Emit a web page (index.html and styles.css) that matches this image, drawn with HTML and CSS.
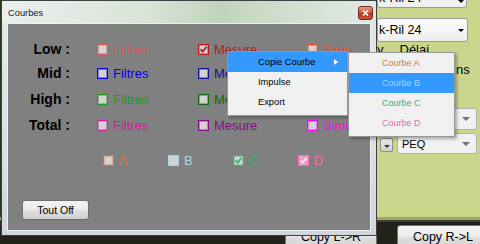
FILE: index.html
```html
<!DOCTYPE html>
<html>
<head>
<meta charset="utf-8">
<link rel="stylesheet" href="styles.css">
</head>
<body>
<div class="app">
  <div class="main">
    <div class="side">
      <div class="combo combo-top"><span>k-Ril 24</span><i class="arr arr-top"></i></div>
      <div class="combo combo-2"><span>k-Ril 24</span><i class="arr"></i></div>
      <div class="lbl-row"><span>y</span><span class="delai">Délai</span></div>
      <div class="ns">ns</div>
      <div class="combo combo-3"><i class="arr arr-gray"></i></div>
      <div class="peq-row">
        <div class="spin"><i class="spin-arr"></i></div>
        <div class="combo combo-4"><span>PEQ</span><i class="arr arr-gray"></i></div>
      </div>
    </div>
  </div>
  <div class="bottom">
    <button class="btn-copy">Copy L-&gt;R</button>
    <button class="btn-copy">Copy R-&gt;L</button>
  </div>

  <div class="window">
    <div class="titlebar">
      <span class="title">Courbes</span>
      <div class="close"><svg width="7" height="6" viewBox="0 0 7 6"><path d="M1 0.5 L6 5.5 M6 0.5 L1 5.5" stroke="#fff" stroke-width="1.6"/></svg></div>
    </div>
    <div class="client">
      <div class="grid">
        <div class="lab">Low :</div>
        <div class="cell c-lf"><span class="cb"></span>Filtres</div>
        <div class="cell c-lm"><span class="cb"><svg width="9" height="9" viewBox="0 0 9 9"><path d="M1.5 4.2 L3.6 6.6 L7.6 1.8" fill="none" stroke="currentColor" stroke-width="1.7"/></svg></span>Mesure</div>
        <div class="cell c-ls"><span class="cb"></span>Simu</div>

        <div class="lab">Mid :</div>
        <div class="cell c-mf"><span class="cb"></span>Filtres</div>
        <div class="cell c-mm"><span class="cb"></span>Mesure</div>
        <div class="cell c-ms"><span class="cb"></span>Simu</div>

        <div class="lab">High :</div>
        <div class="cell c-hf"><span class="cb"></span>Filtres</div>
        <div class="cell c-hm"><span class="cb"></span>Mesure</div>
        <div class="cell c-hs"><span class="cb"></span>Simu</div>

        <div class="lab">Total :</div>
        <div class="cell c-tf"><span class="cb"></span>Filtres</div>
        <div class="cell c-tm"><span class="cb"></span>Mesure</div>
        <div class="cell c-ts"><span class="cb"></span>Simu</div>
      </div>
      <div class="abcd">
        <div class="cell c-a"><span class="cb"></span>A</div>
        <div class="cell c-b"><span class="cb"></span>B</div>
        <div class="cell c-c"><span class="cb"><svg width="9" height="9" viewBox="0 0 9 9"><path d="M1.5 4.2 L3.6 6.6 L7.6 1.8" fill="none" stroke="currentColor" stroke-width="1.7"/></svg></span>C</div>
        <div class="cell c-d"><span class="cb cb-d"><svg width="9" height="9" viewBox="0 0 9 9"><path d="M1.5 4.2 L3.6 6.6 L7.6 1.8" fill="none" stroke="#fbe0ee" stroke-width="1.7"/></svg></span>D</div>
      </div>
      <button class="tout">Tout Off</button>
    </div>
  </div>

  <div class="menu">
    <div class="mi hot"><span>Copie Courbe</span><i class="sub-arrow"></i></div>
    <div class="mi"><span>Impulse</span></div>
    <div class="mi"><span>Export</span></div>
  </div>

  <div class="menu submenu">
    <div class="mi si s-a">Courbe A</div>
    <div class="mi si s-b hot">Courbe B</div>
    <div class="mi si s-c">Courbe C</div>
    <div class="mi si s-d">Courbe D</div>
  </div>
</div>
</body>
</html>
```

FILE: styles.css
```css
* { box-sizing: border-box; margin: 0; padding: 0; }
html, body { width: 480px; height: 244px; overflow: hidden; }
body { font-family: "Liberation Sans", Arial, sans-serif; background: #23231c; color: #000; }

.app { position: relative; width: 480px; height: 244px; display: flex; flex-direction: column; overflow: hidden; }

/* application behind the dialog */
.main { height: 217px; flex: none; display: flex; justify-content: flex-end;
  background: linear-gradient(90deg, #27361f 0, #27361f 2px, #cad68c 2px); }
.side { width: 103px; display: flex; flex-direction: column; font-size: 13px; }

.combo { display: flex; align-items: center; border: 1px solid #9a9a9a; border-radius: 3px;
  background: linear-gradient(#fbfbfb, #eeeeee); padding-left: 1px; flex: none; }
.combo-top { margin-top: -12px; height: 20px; width: 90px; font-size: 12.5px; }
.combo-2 { margin-top: 10px; height: 24px; width: 91px; font-size: 12.5px; }
.arr { margin-left: auto; margin-right: 3px; width: 0; height: 0;
  border-left: 3px solid transparent; border-right: 3px solid transparent; border-top: 3px solid #000; }
.arr-top { margin-top: 6px; margin-right: 2px; }
.arr-gray { border-left-width: 4px; border-right-width: 4px; border-top: 4px solid #6e6e6e; margin-right: 6px; }

.lbl-row { height: 15px; line-height: 15px; display: flex; flex: none; }
.delai { margin-left: 16px; }
.ns { margin-top: 5px; height: 15px; line-height: 15px; padding-left: 79px; flex: none; }

.combo-3 { margin-top: 31px; margin-left: 20px; height: 22px; width: 80px; background: #f1f1f1; border-color: #b4b4b4; }
.peq-row { margin-top: 3px; height: 21px; display: flex; flex: none; }
.spin { margin: 5px 0 0 3px; width: 13px; height: 14px; border: 1px solid #8e8e8e; border-radius: 2px;
  background: linear-gradient(#ececec, #cfcfcf); display: flex; align-items: center; justify-content: center; }
.spin-arr { width: 0; height: 0; border-left: 3px solid transparent; border-right: 3px solid transparent; border-top: 3px solid #333; margin-top: 2px; }
.combo-4 { margin-left: 4px; width: 80px; height: 21px; font-size: 11px; padding-left: 4px; background: #f1f1f1; border-color: #b4b4b4; }

.bottom { flex: 1; display: flex; gap: 20px; padding: 8px 0 0 285px;
  background: linear-gradient(#a2a862 0, #a2a862 3px, #3e3e32 3px, #3e3e32 5px, #23231c 5px); }
.btn-copy { width: 92px; height: 24px; flex: none; border: 1px solid #707070; border-radius: 3px;
  background: linear-gradient(#f6f6f6, #ececec 45%, #dedede 55%, #d3d3d3);
  font: 12.5px "Liberation Sans", Arial, sans-serif; color: #000; }

/* dialog window */
.window { position: absolute; left: 1px; top: 0; width: 376px; height: 236px; display: flex; flex-direction: column;
  border: 1px solid #3a4141; background: linear-gradient(#e3e8e6, #dde2e4 50%, #cfd7dc); }
.titlebar { height: 22px; flex: none; display: flex; align-items: center; padding: 2px 0 0 6px;
  background: linear-gradient(90deg, rgba(240,242,240,.7) 0%, rgba(214,226,210,.8) 40%, rgba(188,210,184,.9) 58%, rgba(206,222,202,.8) 78%, rgba(226,232,228,.6) 100%); }
.title { font-size: 9.3px; color: #1a1a1a; }
.close { margin-left: auto; margin-right: 3px; width: 15px; height: 14px; border: 1px solid #6a2a1e; border-radius: 3px;
  background: linear-gradient(#eb9a86, #d35a42 45%, #bb341e 55%, #cf5236);
  display: flex; align-items: center; justify-content: center; }

.client { flex: 1; margin: 0 5px 4px; border: 1px solid #eef0f0; background: #808080;
  display: flex; flex-direction: column; align-items: flex-start; }
.grid { margin-top: 13px; display: grid; grid-template-columns: 89px 101px 109px 60px; grid-template-rows: 24px 24px 28px 24px; }
.lab { font-weight: bold; font-size: 14px; text-align: right; padding-right: 27px; align-self: center; color: #000; }
.cell { display: flex; align-items: center; gap: 5px; font-size: 13px; white-space: nowrap; }
.cb { width: 11px; height: 11px; flex: none; border: 1px solid currentColor; background: #d3d3d3;
  box-shadow: inset 0 0 0 1px color-mix(in srgb, currentColor 40%, #d3d3d3);
  display: flex; align-items: center; justify-content: center; }
.cb-d { background: #ec9cc8; }

.c-lf { color: #d65c5c; }
.c-lm { color: #b01c1c; }
.c-ls { color: #f04a1e; }
.c-mf { color: #0000ff; }
.c-mm { color: #12128e; }
.c-ms { color: #7a1a7a; }
.c-hf { color: #1f9a1f; }
.c-hm { color: #0c6a0c; }
.c-hs { color: #0c6a0c; }
.c-tf { color: #cc2299; }
.c-tm { color: #840f84; }
.c-ts { color: #ff00ff; }

.abcd { margin-top: 14px; height: 18px; display: flex; padding-left: 95px; }
.abcd .cell { width: 65px; }
.c-a { color: #e07438; }
.c-b { color: #a9d3e3; }
.c-c { color: #3cb371; }
.c-d { color: #ff69b4; }

.tout { margin: 31px 0 0 14px; width: 67px; height: 20px; border: 1px solid #6f6f6f; border-radius: 3px;
  background: linear-gradient(#f4f4f4, #ececec 45%, #dddddd 55%, #d0d0d0);
  font: 10.5px "Liberation Sans", Arial, sans-serif; color: #000; }

/* context menus */
.menu { position: absolute; left: 227px; top: 51px; width: 121px; border: 1px solid #979797; background: #f0f0f0;
  padding-bottom: 3px; box-shadow: 2px 2px 3px rgba(0,0,0,.3); font-size: 9.3px; }
.mi { height: 20px; display: flex; align-items: center; padding-left: 30px; color: #000; white-space: nowrap; }
.mi.hot { background: #3399ff; }
.sub-arrow { margin-left: auto; margin-right: 9px; width: 0; height: 0;
  border-top: 3.5px solid transparent; border-bottom: 3.5px solid transparent; border-left: 4px solid #fff; }
.submenu { left: 348px; top: 52px; width: 107px; font-size: 9px; }
.si { padding-left: 33px; }
.s-a { color: #e0782e; }
.s-b { color: #a6d8f6; }
.s-c { color: #33b070; }
.s-d { color: #f060b4; }
```
